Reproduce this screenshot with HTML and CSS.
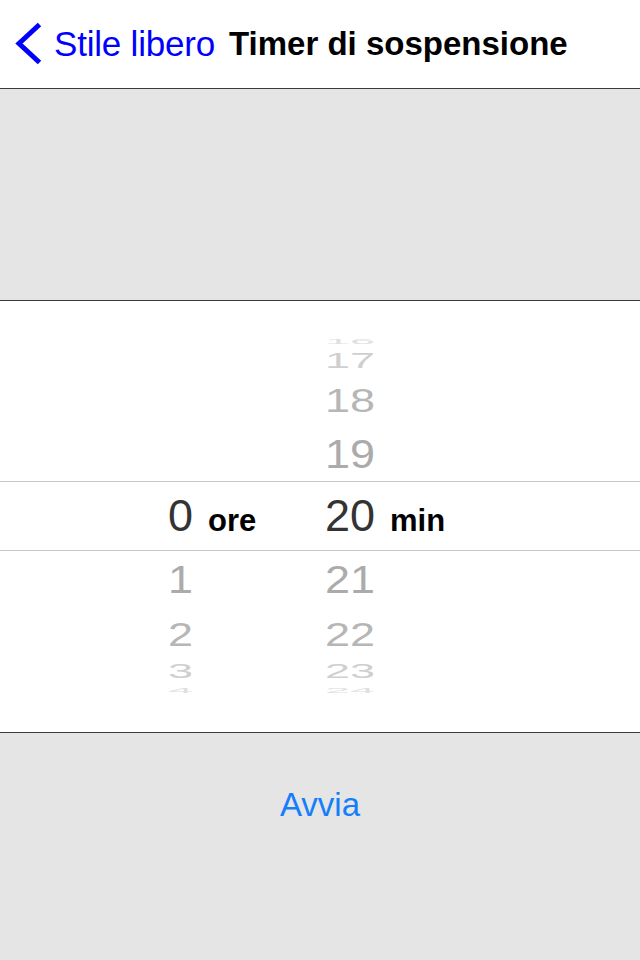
FILE: index.html
```html
<!DOCTYPE html>
<html lang="it">
<head>
<meta charset="utf-8">
<title>Timer di sospensione</title>
<link rel="stylesheet" href="styles.css">
</head>
<body>
<div class="screen">
  <header class="navbar">
    <a class="back">
      <svg class="chev" width="30" height="44" viewBox="0 0 30 44" aria-hidden="true">
        <polyline points="25.5,2.5 5,21.5 25.5,40.5" fill="none" stroke="#0000ff" stroke-width="5" stroke-linejoin="miter" stroke-linecap="butt"/>
      </svg>
      <span class="back-label">Stile libero</span>
    </a>
    <h1 class="title">Timer di sospensione</h1>
  </header>

  <section class="info"></section>

  <section class="picker">
    <div class="upper">
      <div class="row h12"><span class="num s12 c4">16</span></div>
      <div class="row h26"><span class="num s50 c3">17</span></div>
      <div class="row h54"><span class="num s75 c2">18</span></div>
      <div class="row h54"><span class="num s90 c1">19</span></div>
    </div>
    <div class="selected">
      <div class="cell hours">
        <span class="num sel hdigit">0</span><span class="unit">ore</span>
      </div>
      <div class="cell">
        <span class="num sel mdigit">20</span><span class="unit">min</span>
      </div>
    </div>
    <div class="lower">
      <div class="row pair h57">
        <div class="cell hours"><span class="num s85 c1">1</span></div>
        <div class="cell"><span class="num s85 c1">21</span></div>
      </div>
      <div class="row pair h52">
        <div class="cell hours"><span class="num s72 c2">2</span></div>
        <div class="cell"><span class="num s72 c2">22</span></div>
      </div>
      <div class="row pair h22">
        <div class="cell hours"><span class="num s42 c3">3</span></div>
        <div class="cell"><span class="num s42 c3">23</span></div>
      </div>
      <div class="row pair h16">
        <div class="cell hours"><span class="num s12 c4">4</span></div>
        <div class="cell"><span class="num s12 c4">24</span></div>
      </div>
    </div>
  </section>

  <section class="actions">
    <a class="start">Avvia</a>
  </section>
</div>
</body>
</html>
```

FILE: styles.css
```css
* { box-sizing: border-box; }
html, body {
  margin: 0;
  padding: 0;
  background: #e5e5e5;
}
body {
  font-family: "Liberation Sans", Arial, Helvetica, sans-serif;
  width: 640px;
  height: 960px;
  overflow: hidden;
}
.screen {
  display: flex;
  flex-direction: column;
  height: 960px;
}

/* nav bar */
.navbar {
  height: 89px;
  background: #ffffff;
  border-bottom: 1px solid #3a3a3a;
  display: flex;
  align-items: center;
  padding-left: 14px;
}
.back {
  display: flex;
  align-items: center;
  color: #0000ff;
}
.chev {
  display: block;
  margin-right: 10px;
  margin-top: -1px;
}
.back-label {
  font-size: 35px;
  letter-spacing: -0.2px;
}
.title {
  margin: 0 0 0 14px;
  font-size: 33px;
  font-weight: bold;
  color: #000;
}

/* grey info band */
.info {
  height: 212px;
  background: #e5e5e5;
  border-bottom: 1px solid #3a3a3a;
}

/* picker */
.picker {
  height: 432px;
  background: #ffffff;
  border-bottom: 1px solid #3a3a3a;
  display: flex;
  flex-direction: column;
}
.upper {
  height: 180px;
  padding-top: 34px;
  padding-left: 325px;
  overflow: hidden;
}
.lower {
  height: 181px;
  padding-left: 168px;
  overflow: hidden;
}
.row {
  display: flex;
  align-items: center;
  overflow: hidden;
}
.pair .cell { align-items: center; height: 100%; }
.h12 { height: 12px; }
.h16 { height: 16px; }
.h22 { height: 22px; }
.h26 { height: 26px; }
.h52 { height: 52px; }
.h54 { height: 54px; }
.h57 { height: 57px; }

.cell {
  display: flex;
}
.cell.hours {
  width: 157px;
}

.num {
  display: block;
  font-size: 45px;
  line-height: 1;
  color: #a9a9a9;
  transform-origin: center center;
}
.s12 { transform: scaleY(0.14); }
.s42 { transform: scaleY(0.44); }
.s50 { transform: scaleY(0.5); }
.s72 { transform: scaleY(0.72); }
.s75 { transform: scaleY(0.75); }
.s85 { transform: scaleY(0.86); }
.s90 { transform: scaleY(0.9); }
.c1 { color: #ababab; }
.c2 { color: #b6b6b6; }
.c3 { color: #cfcfcf; }
.c4 { color: #e0e0e0; }

.selected {
  height: 70px;
  border-top: 1px solid #c8c8c8;
  border-bottom: 1px solid #c8c8c8;
  display: flex;
  align-items: center;
  padding-left: 168px;
}
.selected .cell {
  align-items: baseline;
}
.num.sel {
  color: #333333;
}
.hdigit { width: 40px; }
.mdigit { width: 65px; }
.unit {
  font-size: 31px;
  font-weight: bold;
  color: #000;
}

/* bottom */
.actions {
  flex: 1;
  background: #e5e5e5;
  display: flex;
  justify-content: center;
  padding-top: 52px;
}
.start {
  font-size: 33px;
  line-height: 40px;
  height: 40px;
  color: #147efb;
}
```
